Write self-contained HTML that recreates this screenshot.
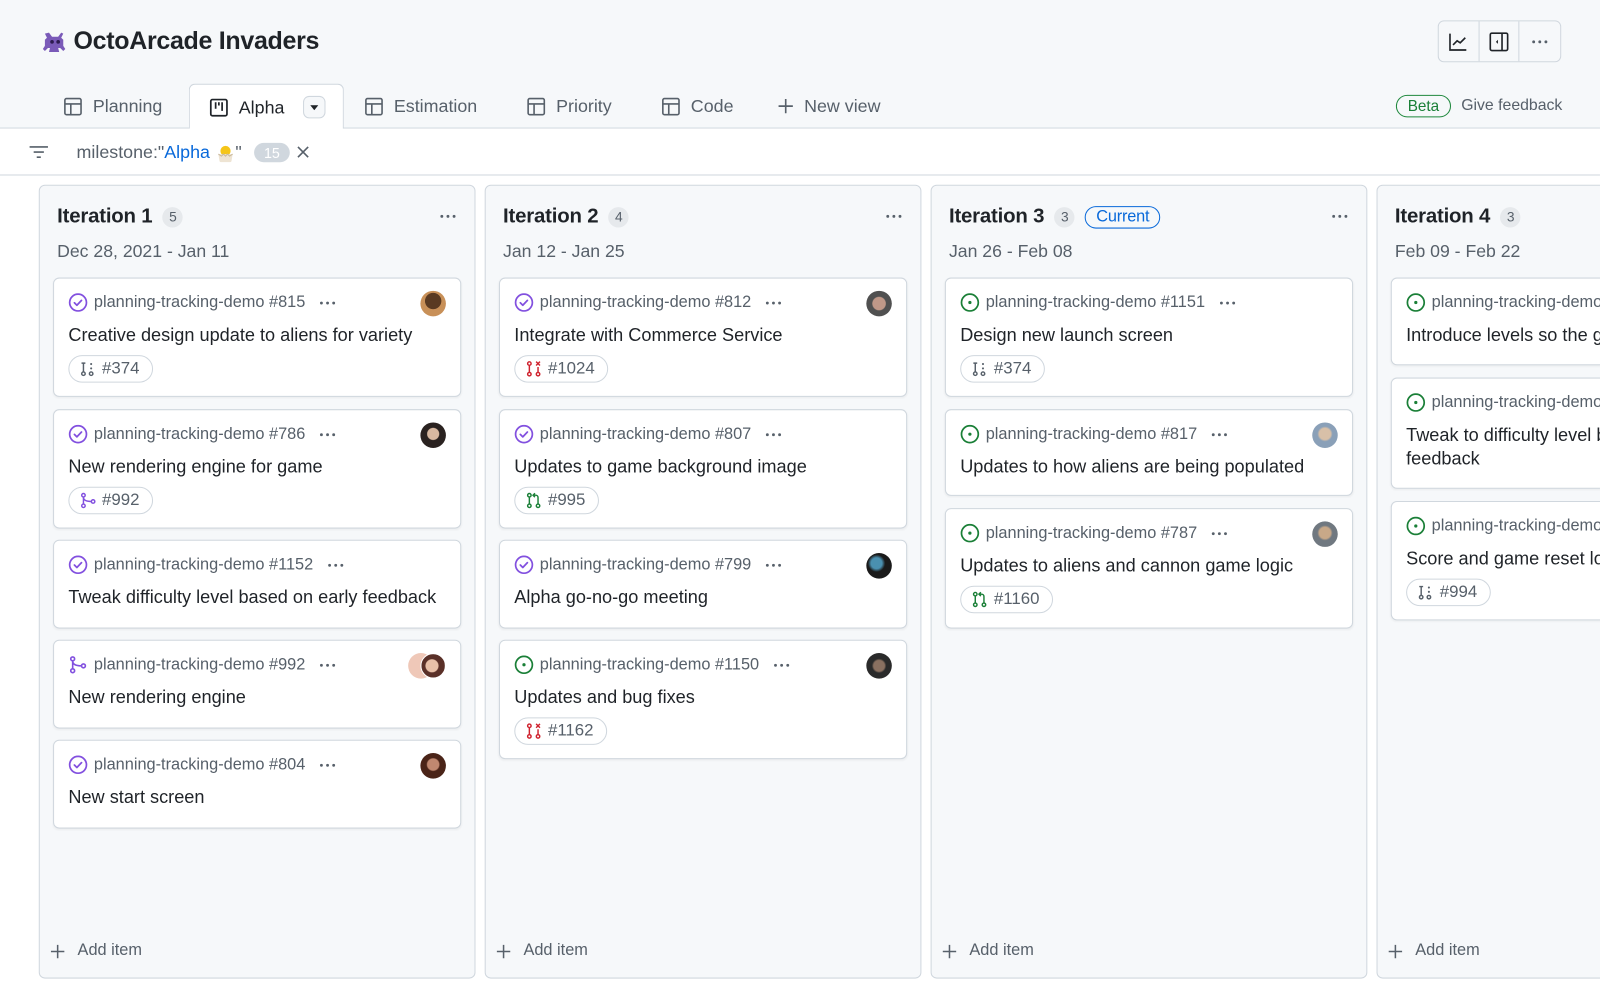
<!DOCTYPE html>
<html><head><meta charset="utf-8"><style>
*{box-sizing:border-box;margin:0;padding:0}
body{width:1600px;height:987px;overflow:hidden;background:#fff;font-family:"Liberation Sans",Arial,sans-serif;color:#1f2328;position:relative}
#w{position:absolute;left:0;top:0;width:1568px;height:967px;transform:scale(1.0204);transform-origin:0 0;overflow:hidden}
.hdr{position:absolute;left:0;top:0;width:1568px;height:126px;background:#f6f8fa;border-bottom:1px solid #d0d7de}
.title{position:absolute;left:42px;top:27px;font-size:24.5px;font-weight:700;letter-spacing:-0.3px;display:flex;align-items:center;gap:6px}
.tools{position:absolute;left:1409px;top:20px;width:121px;height:41px;border:1px solid #d0d7de;border-radius:6px;display:flex;background:#f6f8fa}
.tools div{width:40px;display:flex;align-items:center;justify-content:center;border-right:1px solid #d0d7de}
.tools div:last-child{border-right:0}
.tab{position:absolute;top:82px;height:44px;display:flex;align-items:center;gap:10px;font-size:17.5px;color:#57606a}
.tab.act{left:185px;width:152px;background:#fff;border:1px solid #d0d7de;border-bottom:0;border-radius:6px 6px 0 0;padding-left:19px;color:#1f2328;height:45px}
.beta{position:absolute;left:1368px;top:93px;width:54px;height:22px;border:1px solid #1f883d;border-radius:11px;color:#1a7f37;font-size:15px;display:flex;align-items:center;justify-content:center}
.fb{position:absolute;left:1432px;top:95px;font-size:15.5px;color:#57606a}
.filter{position:absolute;top:126px;left:0;width:1568px;height:46px;border-bottom:1px solid #d0d7de;background:#fff}
.col{position:absolute;top:181px;width:428px;height:778px;background:#f6f8fa;border:1px solid #d0d7de;border-radius:6px}
.ch{position:absolute;left:17px;top:19px;font-size:20px;font-weight:700;display:flex;align-items:center;gap:10px;letter-spacing:-0.2px}
.cnt{display:inline-flex;width:20px;height:20px;border-radius:10px;background:#e6e9ec;font-size:13.5px;font-weight:400;color:#57606a;align-items:center;justify-content:center}
.cur{display:inline-flex;height:22px;padding:0 10px;border:1px solid #0969da;border-radius:11px;color:#0969da;font-size:16px;font-weight:400;align-items:center}
.date{position:absolute;left:17px;top:54px;font-size:17.3px;color:#57606a}
.dots{position:absolute;right:16px;top:28px}
.add{position:absolute;left:10px;top:741px;font-size:16px;color:#57606a;display:flex;align-items:center;gap:12px}
.card{position:absolute;left:13px;width:400px;background:#fff;border:1px solid #d0d7de;border-radius:6px;box-shadow:0 1px 2px rgba(31,35,40,.06)}
.meta{position:absolute;left:14px;top:14px;display:flex;align-items:center;gap:6px;font-size:16px;color:#57606a;white-space:nowrap}
.meta .d{margin-left:6px}
.av{position:absolute;right:14px;top:12px;width:25px;height:25px;border-radius:50%}
.t{position:absolute;left:14px;top:44px;font-size:17.8px;white-space:nowrap;line-height:23px}
.chip{position:absolute;left:14px;top:75px;height:27px;border:1px solid #d0d7de;border-radius:14px;padding:0 12px 0 10px;display:flex;align-items:center;gap:5px;font-size:16.5px;color:#57606a}
</style></head><body><div id="w">
<svg width="0" height="0" style="position:absolute"><defs>
<symbol id="closed" viewBox="0 0 18 18"><circle cx="9" cy="9" r="7.8" fill="none" stroke="#8250df" stroke-width="1.6"/><path d="M5.6 9.2l2.3 2.3 4.3-4.5" fill="none" stroke="#8250df" stroke-width="1.6" stroke-linecap="round" stroke-linejoin="round"/></symbol>
<symbol id="open" viewBox="0 0 18 18"><circle cx="9" cy="9" r="7.8" fill="none" stroke="#1a7f37" stroke-width="1.6"/><circle cx="9" cy="9" r="1.5" fill="#1a7f37"/></symbol>
<symbol id="merge" viewBox="0 0 18 18"><circle cx="4" cy="3.5" r="1.8" fill="none" stroke="#8250df" stroke-width="1.5"/><circle cx="4" cy="14.5" r="1.8" fill="none" stroke="#8250df" stroke-width="1.5"/><circle cx="14" cy="10" r="1.8" fill="none" stroke="#8250df" stroke-width="1.5"/><path d="M4 5.3v7.4M4 5.5c0 3 3 4.5 8.2 4.5" fill="none" stroke="#8250df" stroke-width="1.5"/></symbol>
<symbol id="trk" viewBox="0 0 18 18"><circle cx="4" cy="14" r="1.8" fill="none" stroke="#57606a" stroke-width="1.5"/><path d="M4 12V3M2 3h4" fill="none" stroke="#57606a" stroke-width="1.5"/><circle cx="12" cy="4" r="1.1" fill="#57606a"/><circle cx="12" cy="8.5" r="1.1" fill="#57606a"/><circle cx="12" cy="14" r="1.8" fill="none" stroke="#57606a" stroke-width="1.5"/></symbol>
<symbol id="prc" viewBox="0 0 18 18"><circle cx="4" cy="3.5" r="1.8" fill="none" stroke="#cf222e" stroke-width="1.5"/><circle cx="4" cy="14.5" r="1.8" fill="none" stroke="#cf222e" stroke-width="1.5"/><path d="M4 5.3v7.4" stroke="#cf222e" stroke-width="1.5"/><circle cx="13" cy="14.5" r="1.8" fill="none" stroke="#cf222e" stroke-width="1.5"/><path d="M13 7v5.7M11 1.5l4 4M15 1.5l-4 4" stroke="#cf222e" stroke-width="1.5"/></symbol>
<symbol id="pro" viewBox="0 0 18 18"><circle cx="4" cy="3.5" r="1.8" fill="none" stroke="#1a7f37" stroke-width="1.5"/><circle cx="4" cy="14.5" r="1.8" fill="none" stroke="#1a7f37" stroke-width="1.5"/><path d="M4 5.3v7.4" stroke="#1a7f37" stroke-width="1.5"/><circle cx="13" cy="14.5" r="1.8" fill="none" stroke="#1a7f37" stroke-width="1.5"/><path d="M13 12.7V6c0-1.5-1-2.5-2.5-2.5H8M9.8 1.5L7.8 3.5l2 2" fill="none" stroke="#1a7f37" stroke-width="1.5"/></symbol>
<symbol id="tbl" viewBox="0 0 18 18"><rect x="1.5" y="1.5" width="15" height="15" rx="1.5" fill="none" stroke="#57606a" stroke-width="1.5"/><path d="M1.5 6.5h15M7 6.5v10" stroke="#57606a" stroke-width="1.5"/></symbol>
<symbol id="dt" viewBox="0 0 18 4"><circle cx="3" cy="2" r="1.4" fill="#57606a"/><circle cx="9" cy="2" r="1.4" fill="#57606a"/><circle cx="15" cy="2" r="1.4" fill="#57606a"/></symbol>
<symbol id="plus" viewBox="0 0 16 16"><path d="M8 1v14M1 8h14" stroke="#57606a" stroke-width="1.6"/></symbol>
</defs></svg>

<div class="hdr">
 <div class="title"><svg width="24" height="22" viewBox="0 0 24 22"><path d="M6 2l3 4h6l3-4 2 1-2 4 2 2v6l2 3-2 2-3-3h-2l1 4H6l1-4H5l-3 3-2-2 2-3V9l2-2-2-4z" fill="#7a5ab8"/><circle cx="9" cy="11" r="1.8" fill="#2d1b50"/><circle cx="15" cy="11" r="1.8" fill="#2d1b50"/></svg><span>OctoArcade Invaders</span></div>
 <div class="tools">
  <div><svg width="20" height="20" viewBox="0 0 20 20"><path d="M2 2v16h16" fill="none" stroke="#1f2328" stroke-width="1.6"/><path d="M5 13l4-4 3 2 5-5" fill="none" stroke="#1f2328" stroke-width="1.6"/></svg></div>
  <div><svg width="20" height="20" viewBox="0 0 20 20"><rect x="1.5" y="1.5" width="17" height="17" rx="1.5" fill="none" stroke="#1f2328" stroke-width="1.6"/><path d="M13 1.5v17" stroke="#1f2328" stroke-width="1.6"/><path d="M9 8v4l-2-2z" fill="#1f2328"/></svg></div>
  <div><svg width="20" height="4"><use href="#dt"/></svg></div>
 </div>
 <div class="tab" style="left:62px"><svg width="19" height="19"><use href="#tbl"/></svg>Planning</div>
 <div class="tab act"><svg width="19" height="19" viewBox="0 0 18 18"><rect x="1.5" y="1.5" width="15" height="15" rx="1.5" fill="none" stroke="#1f2328" stroke-width="1.6"/><path d="M6 4v6M9 4v3M12 4v8" stroke="#1f2328" stroke-width="1.6"/></svg>Alpha<span style="margin-left:8px;width:22px;height:22px;border:1px solid #d0d7de;border-radius:6px;display:inline-flex;align-items:center;justify-content:center;background:#f6f8fa"><svg width="8" height="5"><path d="M0 0h8L4 5z" fill="#1f2328"/></svg></span></div>
 <div class="tab" style="left:357px"><svg width="19" height="19"><use href="#tbl"/></svg>Estimation</div>
 <div class="tab" style="left:516px"><svg width="19" height="19"><use href="#tbl"/></svg>Priority</div>
 <div class="tab" style="left:648px"><svg width="19" height="19"><use href="#tbl"/></svg>Code</div>
 <div class="tab" style="left:762px"><svg width="16" height="16"><use href="#plus"/></svg>New view</div>
 <div class="beta">Beta</div>
 <div class="fb">Give feedback</div>
</div>
<div class="filter">
 <svg style="position:absolute;left:28px;top:16px" width="20" height="14" viewBox="0 0 20 14"><path d="M1 2h18M5 7h10M8 12h4" stroke="#57606a" stroke-width="1.6"/></svg>
 <div style="position:absolute;left:75px;top:13px;font-size:17.5px;color:#57606a;display:flex;align-items:center">milestone:"<span style="color:#0969da">Alpha</span>&nbsp;<svg width="20" height="18" viewBox="0 0 20 18"><circle cx="10" cy="7" r="5" fill="#f5c518"/><path d="M3 10h14l-1 6a2 2 0 0 1-2 2H6a2 2 0 0 1-2-2z" fill="#eee4d3"/><path d="M3 10l3 2 2-2 2 2 2-2 2 2 3-2" fill="none" stroke="#c9b89c"/></svg>"</div>
 <div style="position:absolute;left:249px;top:14px;width:35px;height:19px;border-radius:10px;background:#d0d7de;color:#fff;font-size:14px;display:flex;align-items:center;justify-content:center">15</div>
 <svg style="position:absolute;left:291px;top:17px" width="12" height="12"><path d="M1 1l10 10M11 1L1 11" stroke="#57606a" stroke-width="1.6"/></svg>
</div>

<div class="col" style="left:38px">
 <div class="ch">Iteration 1<span class="cnt">5</span></div><svg class="dots" width="20" height="4"><use href="#dt"/></svg>
 <div class="date">Dec 28, 2021 - Jan 11</div>
 <div class="card" style="top:90px;height:117px"><div class="meta"><svg width="19" height="19"><use href="#closed"/></svg>planning-tracking-demo #815<svg class="d" width="20" height="4"><use href="#dt"/></svg></div><div class="av" style="background:radial-gradient(circle at 50% 40%,#5a3a22 40%,#c89058 42%)"></div><div class="t">Creative design update to aliens for variety</div><div class="chip"><svg width="17" height="17"><use href="#trk"/></svg>#374</div></div>
 <div class="card" style="top:219px;height:117px"><div class="meta"><svg width="19" height="19"><use href="#closed"/></svg>planning-tracking-demo #786<svg class="d" width="20" height="4"><use href="#dt"/></svg></div><div class="av" style="background:radial-gradient(circle at 50% 45%,#d8b8a0 30%,#2a2220 34%)"></div><div class="t">New rendering engine for game</div><div class="chip"><svg width="17" height="17"><use href="#merge"/></svg>#992</div></div>
 <div class="card" style="top:347px;height:87px"><div class="meta"><svg width="19" height="19"><use href="#closed"/></svg>planning-tracking-demo #1152<svg class="d" width="20" height="4"><use href="#dt"/></svg></div><div class="t">Tweak difficulty level based on early feedback</div></div>
 <div class="card" style="top:445px;height:87px"><div class="meta"><svg width="19" height="19"><use href="#merge"/></svg>planning-tracking-demo #992<svg class="d" width="20" height="4"><use href="#dt"/></svg></div><div class="av" style="right:26px;background:#efc8b8"></div><div class="av" style="background:radial-gradient(circle at 45% 50%,#e8c0a8 35%,#5a3028 40%);border:1px solid #fff"></div><div class="t">New rendering engine</div></div>
 <div class="card" style="top:543px;height:87px"><div class="meta"><svg width="19" height="19"><use href="#closed"/></svg>planning-tracking-demo #804<svg class="d" width="20" height="4"><use href="#dt"/></svg></div><div class="av" style="background:radial-gradient(circle at 50% 45%,#c08870 30%,#4a2418 36%)"></div><div class="t">New start screen</div></div>
 <div class="add"><svg width="15" height="15"><use href="#plus"/></svg>Add item</div>
</div>

<div class="col" style="left:475px">
 <div class="ch">Iteration 2<span class="cnt">4</span></div><svg class="dots" width="20" height="4"><use href="#dt"/></svg>
 <div class="date">Jan 12 - Jan 25</div>
 <div class="card" style="top:90px;height:117px"><div class="meta"><svg width="19" height="19"><use href="#closed"/></svg>planning-tracking-demo #812<svg class="d" width="20" height="4"><use href="#dt"/></svg></div><div class="av" style="background:radial-gradient(circle at 50% 50%,#c09888 35%,#505050 40%)"></div><div class="t">Integrate with Commerce Service</div><div class="chip"><svg width="17" height="17"><use href="#prc"/></svg>#1024</div></div>
 <div class="card" style="top:219px;height:117px"><div class="meta"><svg width="19" height="19"><use href="#closed"/></svg>planning-tracking-demo #807<svg class="d" width="20" height="4"><use href="#dt"/></svg></div><div class="t">Updates to game background image</div><div class="chip"><svg width="17" height="17"><use href="#pro"/></svg>#995</div></div>
 <div class="card" style="top:347px;height:87px"><div class="meta"><svg width="19" height="19"><use href="#closed"/></svg>planning-tracking-demo #799<svg class="d" width="20" height="4"><use href="#dt"/></svg></div><div class="av" style="background:radial-gradient(circle at 40% 40%,#4a90b0 25%,#1a1a1a 40%)"></div><div class="t">Alpha go-no-go meeting</div></div>
 <div class="card" style="top:445px;height:117px"><div class="meta"><svg width="19" height="19"><use href="#open"/></svg>planning-tracking-demo #1150<svg class="d" width="20" height="4"><use href="#dt"/></svg></div><div class="av" style="background:radial-gradient(circle at 50% 50%,#8a7060 30%,#2a2a2a 40%)"></div><div class="t">Updates and bug fixes</div><div class="chip"><svg width="17" height="17"><use href="#prc"/></svg>#1162</div></div>
 <div class="add"><svg width="15" height="15"><use href="#plus"/></svg>Add item</div>
</div>

<div class="col" style="left:912px">
 <div class="ch">Iteration 3<span class="cnt">3</span><span class="cur">Current</span></div><svg class="dots" width="20" height="4"><use href="#dt"/></svg>
 <div class="date">Jan 26 - Feb 08</div>
 <div class="card" style="top:90px;height:117px"><div class="meta"><svg width="19" height="19"><use href="#open"/></svg>planning-tracking-demo #1151<svg class="d" width="20" height="4"><use href="#dt"/></svg></div><div class="t">Design new launch screen</div><div class="chip"><svg width="17" height="17"><use href="#trk"/></svg>#374</div></div>
 <div class="card" style="top:219px;height:85px"><div class="meta"><svg width="19" height="19"><use href="#open"/></svg>planning-tracking-demo #817<svg class="d" width="20" height="4"><use href="#dt"/></svg></div><div class="av" style="background:radial-gradient(circle at 50% 45%,#d8c0a8 30%,#8aa0b8 40%)"></div><div class="t">Updates to how aliens are being populated</div></div>
 <div class="card" style="top:316px;height:118px"><div class="meta"><svg width="19" height="19"><use href="#open"/></svg>planning-tracking-demo #787<svg class="d" width="20" height="4"><use href="#dt"/></svg></div><div class="av" style="background:radial-gradient(circle at 50% 45%,#c8a888 30%,#707880 40%)"></div><div class="t">Updates to aliens and cannon game logic</div><div class="chip"><svg width="17" height="17"><use href="#pro"/></svg>#1160</div></div>
 <div class="add"><svg width="15" height="15"><use href="#plus"/></svg>Add item</div>
</div>

<div class="col" style="left:1349px">
 <div class="ch">Iteration 4<span class="cnt">3</span></div>
 <div class="date">Feb 09 - Feb 22</div>
 <div class="card" style="top:90px;height:86px"><div class="meta"><svg width="19" height="19"><use href="#open"/></svg>planning-tracking-demo #1153</div><div class="t">Introduce levels so the game gets harder</div></div>
 <div class="card" style="top:188px;height:109px"><div class="meta"><svg width="19" height="19"><use href="#open"/></svg>planning-tracking-demo #1154</div><div class="t" style="white-space:normal;width:340px">Tweak to difficulty level based on early feedback</div></div>
 <div class="card" style="top:309px;height:117px"><div class="meta"><svg width="19" height="19"><use href="#open"/></svg>planning-tracking-demo #1155</div><div class="t">Score and game reset logic</div><div class="chip"><svg width="17" height="17"><use href="#trk"/></svg>#994</div></div>
 <div class="add"><svg width="15" height="15"><use href="#plus"/></svg>Add item</div>
</div>
</div></body></html>
